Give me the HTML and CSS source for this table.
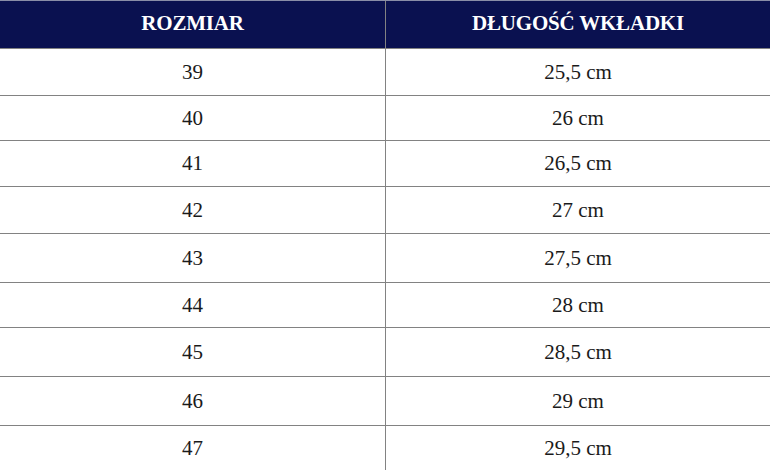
FILE: index.html
```html
<!DOCTYPE html>
<html lang="pl">
<head>
<meta charset="utf-8">
<title>Tabela rozmiarów</title>
<link rel="stylesheet" href="styles.css">
</head>
<body>
<div class="sz-table">
  <div class="sz-line sz-head"><div class="sz-td"><span class="t">ROZMIAR</span></div><div class="sz-td"><span class="t">DŁUGOŚĆ WKŁADKI</span></div></div>
  <div class="sz-line"><div class="sz-td"><span class="t">39</span></div><div class="sz-td"><span class="t">25,5 cm</span></div></div>
  <div class="sz-line"><div class="sz-td"><span class="t">40</span></div><div class="sz-td"><span class="t">26 cm</span></div></div>
  <div class="sz-line"><div class="sz-td"><span class="t">41</span></div><div class="sz-td"><span class="t">26,5 cm</span></div></div>
  <div class="sz-line"><div class="sz-td"><span class="t">42</span></div><div class="sz-td"><span class="t">27 cm</span></div></div>
  <div class="sz-line"><div class="sz-td"><span class="t">43</span></div><div class="sz-td"><span class="t">27,5 cm</span></div></div>
  <div class="sz-line"><div class="sz-td"><span class="t">44</span></div><div class="sz-td"><span class="t">28 cm</span></div></div>
  <div class="sz-line"><div class="sz-td"><span class="t">45</span></div><div class="sz-td"><span class="t">28,5 cm</span></div></div>
  <div class="sz-line"><div class="sz-td"><span class="t">46</span></div><div class="sz-td"><span class="t">29 cm</span></div></div>
  <div class="sz-line"><div class="sz-td"><span class="t">47</span></div><div class="sz-td"><span class="t">29,5 cm</span></div></div>
</div>
</body>
</html>
```
FILE: styles.css
```css
html, body {
  margin: 0;
  padding: 0;
  background: #ffffff;
  font-family: "Liberation Serif", "Times New Roman", serif;
}
.sz-table {
  display: flex;
  flex-direction: column;
  width: 770px;
  font-family: "Liberation Serif", "Times New Roman", serif;
}
.sz-line {
  display: grid;
  grid-template-columns: 385px 1fr;
  box-sizing: border-box;
  border-top: 1px solid #828282;
  height: 47px;
  color: #1a1a1a;
  font-size: 21px;
}
.sz-td {
  display: flex;
  align-items: center;
  justify-content: center;
}
.t {
  font-family: "Liberation Serif", "Times New Roman", serif;
}
.sz-td + .sz-td {
  border-left: 1px solid #828282;
}
.sz-head {
  height: 48px;
  background: #0a1150;
  border-top-color: #8a8ea8;
  color: #ffffff;
  font-weight: bold;
  font-size: 21px;
  letter-spacing: -0.2px;
}
.sz-head .sz-td {
  padding-bottom: 2px;
}
.sz-line:nth-child(3) { height: 45px; }
.sz-line:nth-child(4) { height: 46px; }
.sz-line:nth-child(5) { height: 47px; }
.sz-line:nth-child(6) { height: 49px; }
.sz-line:nth-child(7) { height: 45px; }
.sz-line:nth-child(8) { height: 49px; }
.sz-line:nth-child(9) { height: 49px; }
.sz-line:nth-child(10) { height: 46px; }
```
